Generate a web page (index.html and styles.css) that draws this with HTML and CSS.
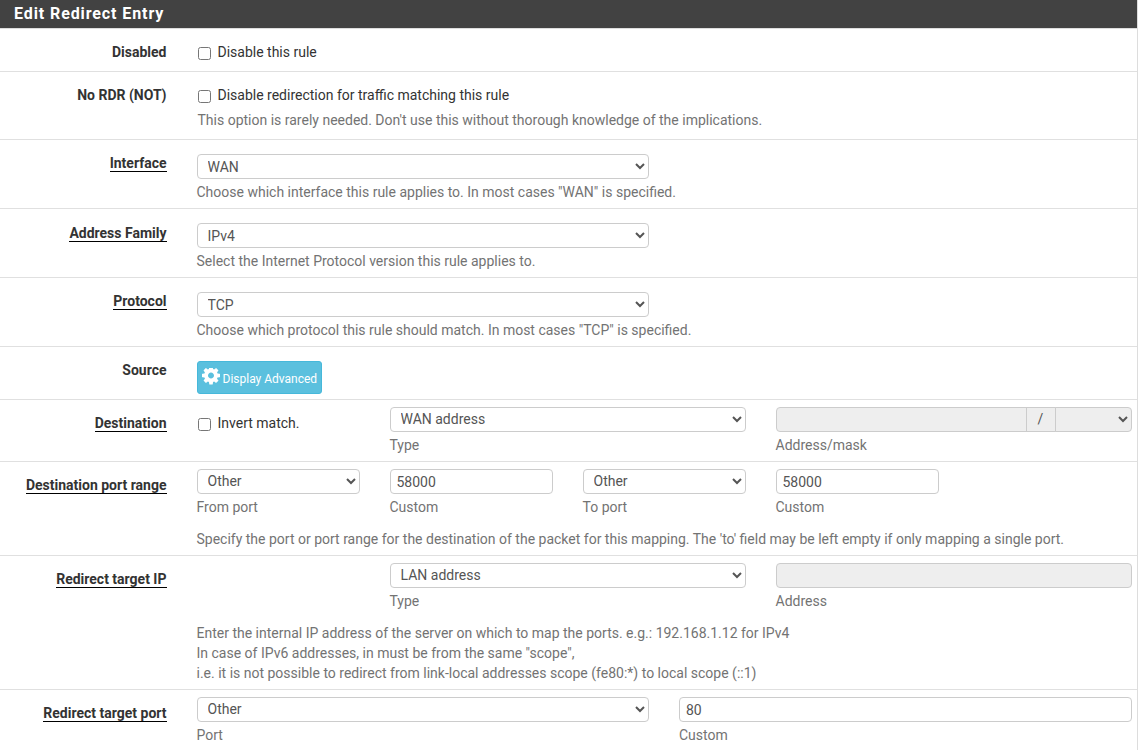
FILE: index.html
```html
<!DOCTYPE html>
<html lang="en">
<head>
<meta charset="utf-8">
<title>Edit Redirect Entry</title>
<link rel="stylesheet" href="styles.css">
</head>
<body>
<div class="panel">
  <h2 class="panel-title">Edit Redirect Entry</h2>

  <div class="row row-check">
    <div class="label"><span>Disabled</span></div>
    <label class="cell span-10 check"><input type="checkbox"> Disable this rule</label>
  </div>

  <div class="row row-check row-note">
    <div class="label"><span>No RDR (NOT)</span></div>
    <div class="cell span-10">
      <label class="check"><input type="checkbox"> Disable redirection for traffic matching this rule</label>
      <p class="help help-gap">This option is rarely needed. Don't use this without thorough knowledge of the implications.</p>
    </div>
  </div>

  <div class="row row-tall">
    <div class="label"><span class="req">Interface</span></div>
    <div class="cell span-5">
      <select class="ctl"><option>WAN</option></select>
    </div>
    <p class="help help-full">Choose which interface this rule applies to. In most cases "WAN" is specified.</p>
  </div>

  <div class="row row-tall">
    <div class="label label-low"><span class="req">Address Family</span></div>
    <div class="cell span-5">
      <select class="ctl"><option>IPv4</option></select>
    </div>
    <p class="help help-full">Select the Internet Protocol version this rule applies to.</p>
  </div>

  <div class="row row-tall">
    <div class="label"><span class="req">Protocol</span></div>
    <div class="cell span-5">
      <select class="ctl"><option>TCP</option></select>
    </div>
    <p class="help help-full">Choose which protocol this rule should match. In most cases "TCP" is specified.</p>
  </div>

  <div class="row row-source">
    <div class="label"><span>Source</span></div>
    <div class="cell span-10">
      <button class="btn" type="button"><svg class="gear" viewBox="0 0 1536 1536" aria-hidden="true"><path d="M1024 640q0-106-75-181t-181-75-181 75-75 181 75 181 181 75 181-75 75-181zm512-109v222q0 12-8 23t-20 13l-185 28q-19 54-39 91 35 50 107 138 10 12 10 25t-9 23q-27 37-99 108t-94 71q-12 0-26-9l-138-108q-44 23-91 38-16 136-29 186-7 28-36 28h-222q-14 0-24.5-8.5t-11.5-21.5l-28-184q-49-16-90-37l-141 107q-10 9-25 9-14 0-25-11-126-114-165-168-7-10-7-23 0-12 8-23 15-21 51-66.5t54-70.5q-27-50-41-99l-183-27q-13-2-21-12.5t-8-23.5v-222q0-12 8-23t19-13l186-28q14-46 39-92-40-57-107-138-10-12-10-24 0-10 9-23 26-36 98.5-107.5t94.5-71.5q13 0 26 10l138 107q44-23 91-38 16-136 29-186 7-28 36-28h222q14 0 24.5 8.5t11.5 21.5l28 184q49 16 90 37l142-107q9-9 24-9 13 0 25 10 129 119 165 170 7 8 7 22 0 12-8 23-15 21-51 66.5t-54 70.5q26 50 41 98l183 28q13 2 21 12.5t8 23.5z"/></svg><span>Display Advanced</span></button>
    </div>
  </div>

  <div class="row row-compact">
    <div class="label"><span class="req">Destination</span></div>
    <label class="cell span-2 check check-inline"><input type="checkbox"> Invert match.</label>
    <div class="cell span-4">
      <select class="ctl"><option>WAN address</option></select>
      <p class="help help-under">Type</p>
    </div>
    <div class="cell span-4">
      <div class="group">
        <input class="ctl group-input" type="text" disabled>
        <span class="group-addon">/</span>
        <select class="ctl group-select" disabled><option></option></select>
      </div>
      <p class="help help-under">Address/mask</p>
    </div>
  </div>

  <div class="row row-compact">
    <div class="label"><span class="req">Destination port range</span></div>
    <div class="cell span-2">
      <select class="ctl"><option>Other</option></select>
      <p class="help help-under">From port</p>
    </div>
    <div class="cell span-2">
      <input class="ctl" type="text" value="58000">
      <p class="help help-under">Custom</p>
    </div>
    <div class="cell span-2">
      <select class="ctl"><option>Other</option></select>
      <p class="help help-under">To port</p>
    </div>
    <div class="cell span-2">
      <input class="ctl" type="text" value="58000">
      <p class="help help-under">Custom</p>
    </div>
    <p class="help help-long">Specify the port or port range for the destination of the packet for this mapping. The 'to' field may be left empty if only mapping a single port.</p>
  </div>

  <div class="row row-compact">
    <div class="label"><span class="req">Redirect target IP</span></div>
    <div class="cell cell-skip span-4">
      <select class="ctl"><option>LAN address</option></select>
      <p class="help help-under">Type</p>
    </div>
    <div class="cell span-4">
      <input class="ctl" type="text" disabled>
      <p class="help help-under">Address</p>
    </div>
    <p class="help help-long">Enter the internal IP address of the server on which to map the ports. e.g.: 192.168.1.12 for IPv4<br>In case of IPv6 addresses, in must be from the same "scope",<br>i.e. it is not possible to redirect from link-local addresses scope (fe80:*) to local scope (::1)</p>
  </div>

  <div class="row row-compact row-last">
    <div class="label"><span class="req">Redirect target port</span></div>
    <div class="cell span-5">
      <select class="ctl"><option>Other</option></select>
      <p class="help help-under">Port</p>
    </div>
    <div class="cell span-5">
      <input class="ctl" type="text" value="80">
      <p class="help help-under">Custom</p>
    </div>
  </div>
</div>
</body>
</html>
```
FILE: styles.css
```css
* { box-sizing: border-box; }
html, body { margin: 0; padding: 0; overflow: hidden; }
body {
  background: #fff;
  color: #333;
  font: 14px/20px Roboto, "Liberation Sans", sans-serif;
}
.panel { width: 1138px; height: 750px; overflow: hidden; border-right: 1px solid #ddd; }
.panel-title {
  margin: 0;
  height: 29px;
  padding: 4px 14px 0;
  background: #424242;
  border-bottom: 1px solid #ddd;
  color: #fff;
  font-size: 16px;
  font-weight: 700;
  line-height: 20px;
  letter-spacing: .9px;
}
.row {
  display: grid;
  grid-template-columns: 166.5px repeat(10, 66.5px);
  column-gap: 30px;
  align-content: start;
  border-bottom: 1px solid #e0e0e0;
}
.row-check { height: 43px; }
.row-note { height: 68px; }
.row-tall { height: 69px; }
.row-source { height: 53px; }
.row-compact { padding-bottom: 6px; }
.row-last { border-bottom: 0; }
.label { grid-column: 1; padding-top: 13px; text-align: right; font-weight: 700; }
.label-low { padding-top: 14px; }
.req { border-bottom: 1px solid #000; }
.cell { padding-top: 7px; min-width: 0; }
.row-check .cell, .check-inline { padding-top: 13px; }
.row-tall .cell, .row-source .cell { padding-top: 14px; }
.span-2 { grid-column: span 2; }
.span-4 { grid-column: span 4; }
.span-5 { grid-column: span 5; }
.span-10 { grid-column: span 10; }
.cell-skip { grid-column: 4 / span 4; }
.check { display: block; }
.check input { width: 13px; height: 13px; margin: 4px 3px 0 1.5px; vertical-align: -3px; }
.ctl {
  display: block;
  width: 100%;
  height: 25px;
  padding: 0 6px;
  background-color: #fff;
  border: 1px solid #ccc;
  border-radius: 4px;
  color: #555;
  font: inherit;
}
.row-tall select.ctl { padding-top: 1px; }
.row-compact select.ctl { padding-bottom: 2px; }
.ctl:disabled { background-color: #eee; opacity: 1; }
.help { margin: 0; color: #737373; }
.help-gap { margin: 5px 0 0 1px; }
.help-under { margin-top: 3px; }
.help-full { grid-column: 2 / -1; margin-top: 3px; }
.help-long { grid-column: 2 / -1; margin-top: 12px; }
.group { display: flex; }
.group-input { flex: 1; width: auto; min-width: 0; border-radius: 4px 0 0 4px; }
.group-addon {
  width: 30px;
  flex: none;
  margin-left: -1px;
  background: #eee;
  border: 1px solid #ccc;
  color: #555;
  line-height: 23px;
  text-align: center;
}
.group-select { width: 77px; flex: none; margin-left: -1px; border-radius: 0 4px 4px 0; }
.btn {
  display: flex;
  align-items: center;
  gap: 3px;
  height: 33px;
  width: 125px;
  padding: 0 4px;
  background: #5bc0de;
  border: 1px solid #46b8da;
  border-radius: 3px;
  color: #fff;
  font: 12px/18px Roboto, "Liberation Sans", sans-serif;
  white-space: nowrap;
}
.btn span { padding-top: 2px; }
.gear { width: 18px; height: 18px; fill: #fff; margin-top: -2px; flex: none; }
```
